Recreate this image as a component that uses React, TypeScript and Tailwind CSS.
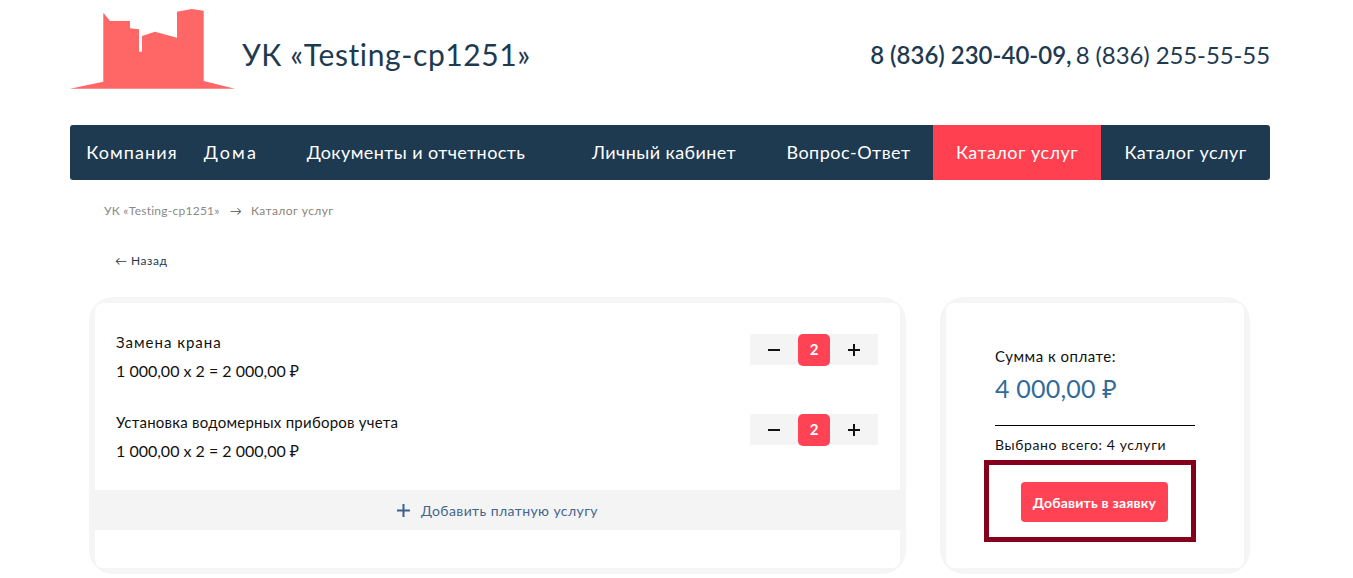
const navItems = [
  { label: 'Компания', width: 'w-[124px]', tracking: 'tracking-[1.1px]', active: false },
  { label: 'Дома', width: 'w-[74px]', tracking: 'tracking-[2.2px]', active: false },
  { label: 'Документы и отчетность', width: 'w-[296px]', tracking: 'tracking-[0.4px]', active: false },
  { label: 'Личный кабинет', width: 'w-[200px]', tracking: 'tracking-[0.4px]', active: false },
  { label: 'Вопрос-Ответ', width: 'w-[169px]', tracking: 'tracking-[0.5px]', active: false },
  { label: 'Каталог услуг', width: 'w-[168px]', tracking: 'tracking-[0.45px]', active: true },
  { label: 'Каталог услуг', width: 'w-[169px]', tracking: 'tracking-[0.45px]', active: false },
];

const services = [
  { name: 'Замена крана', tracking: 'tracking-[1px]' },
  { name: 'Установка водомерных приборов учета', tracking: 'tracking-[0.25px]' },
];

function Logo() {
  return (
    <svg className="mt-[9px] shrink-0" width="165" height="80" viewBox="70 9 165 80">
      <path
        fill="#ff6666"
        d="M103.3 12.7 110 21h20v7.3l9 1v22.4h3V36l13-4.3 22 6V11.7L191.7 9l12 1.7V81L235 88.7H70l33.3-7z"
      />
    </svg>
  );
}

function Stepper() {
  return (
    <div className="flex h-[31px] w-[128px] items-center bg-[#f4f4f4]">
      <svg className="ml-[18px]" width="12" height="12" viewBox="0 0 12 12">
        <path d="M0 6h12" stroke="#111" strokeWidth="2" />
      </svg>
      <div className="ml-[18px] flex h-[32px] w-[32px] items-center justify-center rounded-[5px] bg-[#ff4354] text-[15px] font-bold text-white">
        2
      </div>
      <svg className="ml-[18px]" width="12" height="12" viewBox="0 0 12 12">
        <path d="M0 6h12M6 0v12" stroke="#111" strokeWidth="2" />
      </svg>
    </div>
  );
}

export default function App() {
  return (
    <div className="h-[578px] w-[1340px] overflow-hidden bg-white font-['Lato','Noto_Sans',sans-serif] text-[#111]">
      <div className="mx-auto w-[1200px]">
        <header className="flex h-[125px] items-start">
          <Logo />
          <div className="ml-[7px] mt-[34px] text-[30px] leading-[40px] tracking-[0.6px] text-[#1e3a50]">
            УК «Testing-cp1251»
          </div>
          <div className="ml-auto mt-[39px] flex gap-[4px] text-[24px] leading-[32px] text-[#1e3a50]">
            <span className="font-semibold">8 (836) 230-40-09,</span>
            <span className="tracking-[-0.1px]">8 (836) 255-55-55</span>
          </div>
        </header>

        <nav className="flex h-[55px] overflow-hidden rounded-[3px] bg-[#1e3a50] text-[18px] text-white">
          {navItems.map((item, i) => (
            <a
              key={i}
              className={`flex items-center justify-center whitespace-nowrap ${item.width} ${item.tracking} ${item.active ? 'bg-[#ff4050]' : ''}`}
            >
              {item.label}
            </a>
          ))}
        </nav>

        <div className="ml-[34px] mt-[23px] flex h-[16px] items-center text-[12px] tracking-[0.25px] text-[#8a8a8a]">
          <span>УК «Testing-cp1251»</span>
          <span className="ml-[10px] mr-[9px] text-[#555]">→</span>
          <span className="tracking-[0.4px] text-[#8c8478]">Каталог услуг</span>
        </div>

        <div className="ml-[45px] mt-[34px] h-[16px] text-[12px] leading-[16px] tracking-[0.5px] text-[#1e3a50]">
          ← Назад
        </div>

        <div className="ml-[19px] mt-[28px] flex items-start">
          <section className="h-[277px] w-[817px] overflow-hidden rounded-[24px] bg-[#f5f5f5] p-[6px]">
            <div className="h-full rounded-[8px] bg-white">
              <div className="h-[187px] pl-[21px] pr-[22px] pt-[31px]">
                {services.map((service) => (
                  <div key={service.name} className="flex h-[80px] items-start justify-between">
                    <div>
                      <div className={`text-[15px] leading-[17px] ${service.tracking}`}>{service.name}</div>
                      <div className="mt-[10px] text-[16px] leading-[20px]">1 000,00 x 2 = 2 000,00 ₽</div>
                    </div>
                    <Stepper />
                  </div>
                ))}
              </div>
              <div className="-mx-[6px] flex h-[40px] items-center justify-center gap-[11px] bg-[#f4f4f4] text-[14px] tracking-[0.4px] text-[#44658c]">
                <svg width="13" height="13" viewBox="0 0 13 13">
                  <path d="M0 6.5h13M6.5 0v13" stroke="#3b6191" strokeWidth="2" />
                </svg>
                Добавить платную услугу
              </div>
            </div>
          </section>

          <section className="ml-[34px] h-[277px] w-[310px] rounded-[24px] bg-[#f5f5f5] p-[6px]">
            <div className="h-full rounded-[8px] bg-white pl-[49px] pt-[44px]">
              <div className="text-[15px] leading-[18px] tracking-[0.5px]">Сумма к оплате:</div>
              <div className="mt-[6px] text-[25px] leading-[34px] tracking-[0.2px] text-[#336a9a]">4 000,00 ₽</div>
              <div className="mt-[20px] h-px w-[200px] bg-black" />
              <div className="mt-[10px] text-[14px] leading-[18px] tracking-[0.6px]">Выбрано всего: 4 услуги</div>
              <div className="-ml-[11px] mt-[6px] flex h-[82px] w-[212px] items-center justify-center border-[5px] border-[#85001b]">
                <button className="ml-[9px] mt-[2px] h-[40px] w-[147px] rounded-[4px] bg-[#ff4354] text-[14px] font-bold tracking-[0.2px] text-white">
                  Добавить в заявку
                </button>
              </div>
            </div>
          </section>
        </div>
      </div>
    </div>
  );
}
